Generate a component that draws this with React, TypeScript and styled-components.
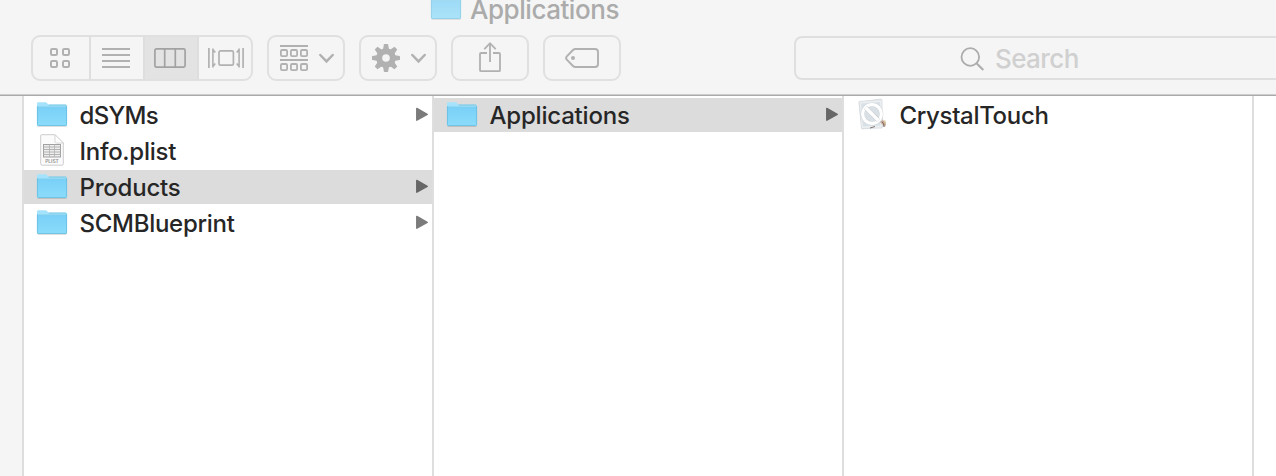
import React from "react";
import styled, { createGlobalStyle } from "styled-components";

const GlobalStyle = createGlobalStyle`
  * { box-sizing: border-box; }
  html, body { margin: 0; padding: 0; }
  body { overflow: hidden; font-family: Inter, "Liberation Sans", sans-serif; font-weight: 500; }
  svg { display: block; flex: none; overflow: visible; }
`;

const Window = styled.div`
  width: 1276px;
  height: 476px;
  display: flex;
  flex-direction: column;
  overflow: hidden;
  background: #fff;
`;

const Header = styled.header`
  height: 96px;
  flex: none;
  display: flex;
  flex-direction: column;
  background: #f5f5f5;
  border-bottom: 1px solid #aaa8aa;
  box-shadow: inset 0 -1px #cfcecf;
`;

const TitleBar = styled.div`
  height: 35px;
  display: flex;
  align-items: flex-start;
  padding-left: 430px;
  gap: 8px;
`;

const TitleIcon = styled.div`
  margin-top: -5px;
  opacity: 0.7;
`;

const Title = styled.span<{ $tracking: number }>`
  font-size: 26px;
  line-height: 19px;
  letter-spacing: ${(p) => p.$tracking}px;
  color: #ababab;
  white-space: nowrap;
`;

const Toolbar = styled.div`
  display: flex;
  align-items: center;
  height: 46px;
  padding-left: 31px;
  gap: 14px;
`;

const Segmented = styled.div`
  display: flex;
  flex: none;
  width: 222px;
  height: 46px;
  border: 2px solid #e0e0e0;
  border-radius: 9px;
  overflow: hidden;
`;

const Segment = styled.div<{ $width: number; $active?: boolean }>`
  width: ${(p) => p.$width}px;
  flex: none;
  display: flex;
  align-items: center;
  justify-content: center;
  padding-right: 2px;
  color: ${(p) => (p.$active ? "#a2a2a2" : "#b1b1b1")};
  background: ${(p) => (p.$active ? "#e3e3e3" : "transparent")};
  & + & { border-left: 2px solid #dedede; }
  &:last-child { padding: 0 0 0 2px; }
`;

const ToolButton = styled.div`
  width: 78px;
  height: 46px;
  flex: none;
  display: flex;
  align-items: center;
  justify-content: center;
  gap: 11px;
  border: 2px solid #e0e0e0;
  border-radius: 9px;
  color: #b1b1b1;
`;

const MenuButton = styled(ToolButton)`
  padding-left: 2px;
`;

const SearchField = styled.div`
  width: 500px;
  height: 44px;
  flex: none;
  display: flex;
  align-items: center;
  margin-left: 159px;
  padding-left: 164px;
  gap: 11px;
  border: 2px solid #dfdfdf;
  border-radius: 8px;
  color: #acacac;
`;

const Placeholder = styled.span`
  padding-top: 2px;
  font-size: 26px;
  line-height: 32px;
  letter-spacing: -0.6px;
  color: #d0d0d0;
`;

const Browser = styled.main`
  flex: 1;
  display: flex;
`;

const Gutter = styled.div`
  width: 24px;
  flex: none;
  background: #f5f5f5;
  border-right: 2px solid #dedede;
`;

const Column = styled.div`
  width: 410px;
  flex: none;
  display: flex;
  flex-direction: column;
  gap: 2px;
  padding-top: 2px;
  border-right: 2px solid #dedede;
`;

const Row = styled.div<{ $selected?: boolean }>`
  height: 34px;
  display: flex;
  align-items: center;
  padding: 0 4px 0 12px;
  background: ${(p) => (p.$selected ? "#dcdcdc" : "transparent")};
  color: ${(p) => (p.$selected ? "#676767" : "#7b7b7b")};
`;

const IconSlot = styled.div`
  width: 32px;
  height: 34px;
  flex: none;
  display: flex;
  align-items: center;
  justify-content: center;
`;

const Name = styled.span<{ $tracking: number }>`
  flex: 1;
  margin-left: 11.5px;
  padding-top: 1px;
  font-size: 24px;
  line-height: 30px;
  letter-spacing: ${(p) => p.$tracking}px;
  color: #262626;
  white-space: nowrap;
`;

const Folder = () => (
  <svg width="32" height="26" viewBox="0 0 32 26">
    <defs>
      <linearGradient id="folderFront" x1="0" y1="0" x2="0" y2="1">
        <stop offset="0" stopColor="#79d0f7" />
        <stop offset="1" stopColor="#8bdcfb" />
      </linearGradient>
    </defs>
    <path d="M1.5 24.500h29" stroke="#000" strokeOpacity=".13" />
    <g transform="translate(0 -.7)">
      <path d="M1 23.5V2.2Q1 1 2.200 1H9.500Q10.500 1 11.200 2L12.500 3.500H29.800Q31 3.500 31 4.700V23.500Q31 24.500 30 24.500H2Q1 24.500 1 23.500Z" fill="#a4e3fb" />
      <path d="M1 6.200H31V23.500Q31 24.500 30 24.500H2Q1 24.500 1 23.500Z" fill="url(#folderFront)" />
      <path d="M1 5.800H31" stroke="#69c4e9" strokeWidth=".8" />
      <path d="M1.400 5V23.200Q1.400 24.200 2.400 24.200H29.600Q30.600 24.200 30.600 23.200V4.500M12.500 3.700H30" fill="none" stroke="#66bddf" strokeWidth=".8" />
    </g>
  </svg>
);

const PlistFile = () => (
  <svg width="24" height="32" viewBox="0 0 24 32">
    <g transform="translate(0 -1)">
      <path d="M1.500 .700H15L23.300 9V29.800Q23.300 31.200 22 31.200H2Q.700 31.200 .700 29.800V2Q.700 .700 1.500 .700Z" fill="#fbfbfb" stroke="#cdcdcd" />
      <path d="M15 .700V7.500Q15 9 16.500 9H23.300Z" fill="#fff" stroke="#cccccc" strokeWidth=".8" />
      <rect x="3.500" y="10.500" width="17" height="12.500" fill="#ededed" stroke="#a0a0a0" />
      <path d="M3.500 13H20.500M3.500 15.500H20.500M3.500 18H20.500M3.500 20.500H20.500" stroke="#b3b3b3" />
      <path d="M9.500 10.500V23M14.500 10.500V23" stroke="#b3b3b3" strokeWidth=".8" />
      <text x="12" y="29.200" textAnchor="middle" fontSize="4.900" fontWeight="600" fill="#929292">PLIST</text>
    </g>
  </svg>
);

const CrystalTouchApp = () => (
  <svg width="30" height="32" viewBox="0 0 30 32">
    <g transform="translate(1 -1)">
      <path d="M1 4.500L22.500 1L25.500 28.500L4 31Z" fill="#f0f2f4" stroke="#d4d9dd" strokeWidth=".8" />
      <path d="M1 3.500L24 1.500V30L3.500 30.500Z" fill="#eceff2" stroke="#d5dade" strokeWidth=".8" />
      <path d="M3 5.500L22 4L22.500 27.500L5 28.500Z" fill="#dae1e6" />
      <path d="M15 14l7 6-3 3-6-5z" fill="#d3cbc8" />
      <circle cx="14" cy="16" r="9.300" fill="none" stroke="#c8ced3" strokeWidth="4" />
      <circle cx="14" cy="16" r="9.300" fill="none" stroke="#fff" strokeWidth="3.200" />
      <path d="M7.500 9.500L20.500 22.500" stroke="#c8ced3" strokeWidth="4" />
      <path d="M7.500 9.500L20.500 22.500" stroke="#fff" strokeWidth="3.200" />
      <path d="M22 24l3-2 3 4-1 3-2-2z" fill="#c3a392" />
      <path d="M24 24l1.500 1.500 .5 3.500M12 30l5-1.500" fill="none" stroke="#766660" strokeWidth=".9" />
      <path d="M26.500 22.500l1 3" stroke="#d9c090" strokeWidth="1.300" />
    </g>
  </svg>
);

const Disclosure = () => (
  <svg width="12" height="16" viewBox="0 0 12 16">
    <path d="M.8 1.400L11.200 7.300L.8 13.200Z" fill="currentColor" stroke="currentColor" strokeWidth="1.500" strokeLinejoin="round" />
  </svg>
);

const GridIcon = () => (
  <svg width="20" height="20" viewBox="0 0 20 20" fill="none" stroke="currentColor" strokeWidth="2">
    {[1, 13].map((y) => [1, 13].map((x) => <rect key={`${x}-${y}`} x={x} y={y} width="6" height="6" rx="1.200" />))}
  </svg>
);

const ListIcon = () => (
  <svg width="28" height="20" viewBox="0 0 28 20">
    <path d="M0 1H28M0 7H28M0 13H28M0 19H28" stroke="currentColor" strokeWidth="1.800" />
  </svg>
);

const ColumnsIcon = () => (
  <svg width="32" height="20" viewBox="0 0 32 20" fill="none" stroke="currentColor" strokeWidth="1.700">
    <rect x=".9" y=".9" width="30.200" height="18.200" rx="1.500" />
    <path d="M10.700 1V19M21.300 1V19" />
  </svg>
);

const CoverFlowIcon = () => (
  <svg width="36" height="20" viewBox="0 0 36 20" fill="none" stroke="currentColor" strokeWidth="1.700">
    <rect x="11" y="2.800" width="14.400" height="14.400" rx="1.500" />
    <path d="M.9 0V20M35.100 0V20" />
    <path d="M4.900 .500V19.500M4.900 1.500L7.300 4.500M4.900 18.500L7.300 15.500M31.100 .500V19.500M31.100 1.500L28.700 4.500M31.100 18.500L28.700 15.500" strokeWidth="1.600" />
  </svg>
);

const ArrangeIcon = () => (
  <svg width="28" height="26" viewBox="0 0 28 26" fill="none" stroke="currentColor" strokeWidth="1.800">
    <path d="M0 1H28M0 15H28" />
    {[5, 19].map((y) => [0.9, 10.9, 20.9].map((x) => <rect key={`${x}-${y}`} x={x} y={y} width="6.200" height="6.200" rx="1.200" />))}
  </svg>
);

const Chevron = () => (
  <svg width="15" height="10" viewBox="0 0 15 10">
    <path d="M1.300 2L7.500 8.400L13.700 2" fill="none" stroke="currentColor" strokeWidth="2.500" strokeLinecap="round" />
  </svg>
);

const GearIcon = () => (
  <svg width="28" height="28" viewBox="0 0 28 28">
    <circle cx="14" cy="14" r="6.800" fill="none" stroke="currentColor" strokeWidth="6" />
    {[0, 45, 90, 135, 180, 225, 270, 315].map((a) => (
      <path key={a} d="M10.900 6L11.900 .4Q12 0 12.400 0H15.600Q16 0 16.100 .4L17.100 6Z" fill="currentColor" transform={`rotate(${a} 14 14)`} />
    ))}
  </svg>
);

const ShareIcon = () => (
  <svg width="22" height="32" viewBox="0 0 22 32" fill="none" stroke="currentColor" strokeWidth="1.800">
    <path d="M8 11H2Q1 11 1 12V28.200Q1 29.200 2 29.200H20Q21 29.200 21 28.200V12Q21 11 20 11H14" />
    <path d="M11 20V1.200M5.300 7.200L11 1.200L16.700 7.200" />
  </svg>
);

const TagIcon = () => (
  <svg width="34" height="20" viewBox="0 0 34 20">
    <path d="M10.500 1H30Q33 1 33 4V16Q33 19 30 19H10.500Q9 19 8 18L1.800 11.600Q.3 10 1.800 8.400L8 2Q9 1 10.500 1Z" fill="none" stroke="currentColor" strokeWidth="1.900" />
    <circle cx="8" cy="10" r="2" fill="currentColor" />
  </svg>
);

const SearchIcon = () => (
  <svg width="24" height="24" viewBox="0 0 24 24" fill="none" stroke="currentColor">
    <circle cx="10.300" cy="11" r="8.800" strokeWidth="1.800" />
    <path d="M16.500 17.200L23.300 24" strokeWidth="2" />
  </svg>
);

type Item = { name: string; tracking: number; kind: "folder" | "plist" | "app"; selected?: boolean };

const icons = { folder: Folder, plist: PlistFile, app: CrystalTouchApp };

const columns: Item[][] = [
  [
    { name: "dSYMs", tracking: -0.65, kind: "folder" },
    { name: "Info.plist", tracking: -0.27, kind: "plist" },
    { name: "Products", tracking: -0.22, kind: "folder", selected: true },
    { name: "SCMBlueprint", tracking: -0.28, kind: "folder" },
  ],
  [{ name: "Applications", tracking: -0.2, kind: "folder", selected: true }],
  [{ name: "CrystalTouch", tracking: -0.33, kind: "app" }],
];

export default function App() {
  return (
    <Window>
      <GlobalStyle />
      <Header>
        <TitleBar>
          <TitleIcon><Folder /></TitleIcon>
          <Title $tracking={-0.46}>Applications</Title>
        </TitleBar>
        <Toolbar>
          <Segmented>
            <Segment $width={56}><GridIcon /></Segment>
            <Segment $width={54}><ListIcon /></Segment>
            <Segment $width={54} $active><ColumnsIcon /></Segment>
            <Segment $width={54}><CoverFlowIcon /></Segment>
          </Segmented>
          <MenuButton><ArrangeIcon /><Chevron /></MenuButton>
          <MenuButton><GearIcon /><Chevron /></MenuButton>
          <ToolButton><ShareIcon /></ToolButton>
          <ToolButton><TagIcon /></ToolButton>
          <SearchField>
            <SearchIcon />
            <Placeholder>Search</Placeholder>
          </SearchField>
        </Toolbar>
      </Header>
      <Browser>
        <Gutter />
        {columns.map((items, i) => (
          <Column key={i}>
            {items.map((item) => {
              const Icon = icons[item.kind];
              return (
                <Row key={item.name} $selected={item.selected}>
                  <IconSlot><Icon /></IconSlot>
                  <Name $tracking={item.tracking}>{item.name}</Name>
                  {item.kind === "folder" && <Disclosure />}
                </Row>
              );
            })}
          </Column>
        ))}
      </Browser>
    </Window>
  );
}
